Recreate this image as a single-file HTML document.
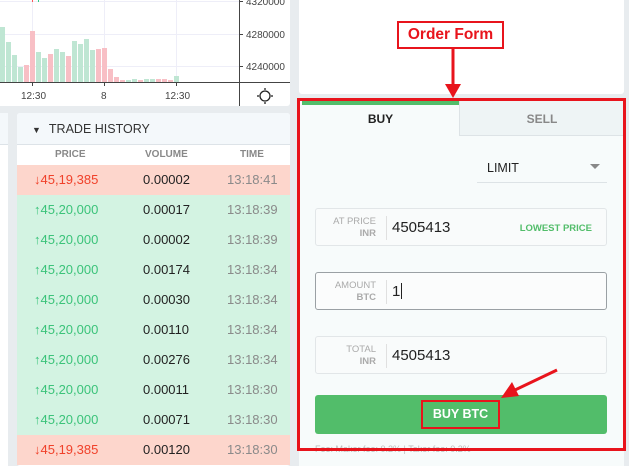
<!DOCTYPE html>
<html><head><meta charset="utf-8"><style>
*{margin:0;padding:0;box-sizing:border-box}
body{width:629px;height:466px;overflow:hidden;background:#e8ecef;font-family:"Liberation Sans",sans-serif;position:relative}
.abs{position:absolute}
.row{position:absolute;left:17px;width:273px;height:30px;font-size:13px;line-height:30px}
.row span{position:absolute}
.p{left:17px}.v{left:126px;color:#222}.t{left:210px;color:#8a8a8a}
.up{background:#d3f3e2}.up .p{color:#3bc37a}
.dn{background:#fdd6cc}.dn .p{color:#f0412a}
.inp{position:absolute;left:315px;width:292px;height:38px;border:1px solid #e2e6e8;border-radius:3px;background:#f9fbfb}
.lab{position:absolute;right:230px;top:7px;text-align:right;font-size:9.5px;color:#aaa;line-height:12px}
.lab b{color:#aaa}
.sep{position:absolute;left:70px;top:7px;width:1px;height:24px;background:#e0e0e0}
.val{position:absolute;left:76px;top:10px;font-size:15px;color:#222}
</style></head><body>
<div class="abs" style="left:0;top:0;width:290px;height:106px;background:#fff;border-radius:0 0 3px 0">
<svg width="290" height="106" style="position:absolute;left:0;top:0">
<g stroke="#eeeef8" stroke-width="1"><line x1="0" y1="1.5" x2="239" y2="1.5"/><line x1="0" y1="34.5" x2="239" y2="34.5"/><line x1="0" y1="66.5" x2="239" y2="66.5"/><line x1="32.5" y1="0" x2="32.5" y2="82"/><line x1="104.5" y1="0" x2="104.5" y2="82"/><line x1="176.5" y1="0" x2="176.5" y2="82"/></g>
<g id="bars"></g>
<line x1="0" y1="82.5" x2="290" y2="82.5" stroke="#444"/>
<line x1="239.5" y1="0" x2="239.5" y2="106" stroke="#444"/>
<g stroke="#444"><line x1="32.5" y1="82" x2="32.5" y2="86"/><line x1="104.5" y1="82" x2="104.5" y2="86"/><line x1="176.5" y1="82" x2="176.5" y2="86"/><line x1="239" y1="1.5" x2="243" y2="1.5"/><line x1="239" y1="34.5" x2="243" y2="34.5"/><line x1="239" y1="66.5" x2="243" y2="66.5"/></g>
<rect x="32" y="0" width="1" height="2" fill="#f55"/><rect x="38" y="0" width="1" height="2" fill="#3c8"/>
<g font-size="10" fill="#444"><text x="246" y="5">4320000</text><text x="246" y="38">4280000</text><text x="246" y="70">4240000</text>
<text x="21" y="99">12:30</text><text x="101" y="99">8</text><text x="165" y="99">12:30</text></g>
<circle cx="265" cy="96" r="5" fill="none" stroke="#222" stroke-width="1.3"/>
<g stroke="#222" stroke-width="1.3"><line x1="265" y1="88" x2="265" y2="90"/><line x1="265" y1="102" x2="265" y2="104"/><line x1="257" y1="96" x2="259" y2="96"/><line x1="271" y1="96" x2="273" y2="96"/></g>
</svg></div>
<div class="abs" style="left:0;top:113px;width:8px;height:353px;background:#fff"></div>
<div class="abs" style="left:0;top:113px;width:8px;height:32px;background:#f4f8fb;border-bottom:1px solid #dde3e8"></div>
<div class="abs" style="left:17px;top:113px;width:273px;height:353px;background:#fff;border-radius:3px;overflow:hidden">
<div style="height:32px;background:#f4f8fb;border-bottom:1px solid #dde3e8;font-size:12.5px;color:#333;line-height:32px;padding-left:15px"><span style="font-size:9px;margin-right:8px">▼</span>TRADE HISTORY</div>
<div style="position:relative;height:20px;font-size:10px;font-weight:bold;color:#888;line-height:20px"><span style="position:absolute;left:38px">PRICE</span><span style="position:absolute;left:128px">VOLUME</span><span style="position:absolute;left:223px">TIME</span></div>
</div>
<div class="row dn" style="top:165px"><span class="p">↓45,19,385</span><span class="v">0.00002</span><span class="t">13:18:41</span></div>
<div class="row up" style="top:195px"><span class="p">↑45,20,000</span><span class="v">0.00017</span><span class="t">13:18:39</span></div>
<div class="row up" style="top:225px"><span class="p">↑45,20,000</span><span class="v">0.00002</span><span class="t">13:18:39</span></div>
<div class="row up" style="top:255px"><span class="p">↑45,20,000</span><span class="v">0.00174</span><span class="t">13:18:34</span></div>
<div class="row up" style="top:285px"><span class="p">↑45,20,000</span><span class="v">0.00030</span><span class="t">13:18:34</span></div>
<div class="row up" style="top:315px"><span class="p">↑45,20,000</span><span class="v">0.00110</span><span class="t">13:18:34</span></div>
<div class="row up" style="top:345px"><span class="p">↑45,20,000</span><span class="v">0.00276</span><span class="t">13:18:34</span></div>
<div class="row up" style="top:375px"><span class="p">↑45,20,000</span><span class="v">0.00011</span><span class="t">13:18:30</span></div>
<div class="row up" style="top:405px"><span class="p">↑45,20,000</span><span class="v">0.00071</span><span class="t">13:18:30</span></div>
<div class="row dn" style="top:435px"><span class="p">↓45,19,385</span><span class="v">0.00120</span><span class="t">13:18:30</span></div>

<div class="abs" style="left:299px;top:0;width:325px;height:94px;background:#fff;border-radius:0 0 3px 3px"></div>
<div class="abs" style="left:299px;top:98px;width:325px;height:368px;background:#f7fbfb"></div>
<div class="abs" style="left:459px;top:101px;width:165px;height:35px;background:#eef4f5;border-left:1px solid #dde3e6;border-bottom:1px solid #dde3e6;font-size:12px;font-weight:bold;color:#888;text-align:center;line-height:36px">SELL</div>
<div class="abs" style="left:302px;top:101px;width:157px;height:4px;background:#52bd6a"></div>
<div class="abs" style="left:302px;top:105px;width:157px;height:31px;font-size:12px;font-weight:bold;color:#222;text-align:center;line-height:29px">BUY</div>
<div class="abs" style="left:487px;top:161px;font-size:12.5px;color:#222">LIMIT</div>
<div class="abs" style="left:590px;top:164px;width:0;height:0;border-left:5px solid transparent;border-right:5px solid transparent;border-top:5px solid #888"></div>
<div class="abs" style="left:477px;top:182px;width:130px;height:1px;background:#dde3e6"></div>
<div class="inp" style="top:208px"><div class="lab">AT PRICE<br><b>INR</b></div><div class="sep"></div><div class="val">4505413</div><div style="position:absolute;right:14px;top:14px;font-size:9.5px;font-weight:bold;color:#52bd6a">LOWEST PRICE</div></div>
<div class="inp" style="top:272px;border-color:#9aa0a4;background:#fbfcfc"><div class="lab">AMOUNT<br><b>BTC</b></div><div class="sep"></div><div class="val">1<span style="display:inline-block;width:1px;height:16px;background:#222;vertical-align:-3px;margin-left:1px"></span></div></div>
<div class="inp" style="top:336px"><div class="lab">TOTAL<br><b>INR</b></div><div class="sep"></div><div class="val">4505413</div></div>
<div class="abs" style="left:315px;top:395px;width:292px;height:39px;background:#52bd6a;border-radius:3px"></div>
<div class="abs" style="left:421px;top:400px;width:79px;height:29px;border:2px solid #e8141c;color:#fff;font-size:12.5px;font-weight:bold;text-align:center;line-height:25px">BUY BTC</div>
<div class="abs" style="left:315px;top:444px;font-size:9px;color:#bbb">Fee: Maker fee: 0.2% | Taker fee: 0.2%</div>
<div class="abs" style="left:297px;top:98px;width:329px;height:353px;border:3px solid #e8141c"></div>
<div class="abs" style="left:397px;top:21px;width:107px;height:28px;border:2px solid #e8141c;background:#fff;color:#e8141c;font-size:15.5px;font-weight:bold;text-align:center;line-height:24px">Order Form</div>
<svg class="abs" style="left:0;top:0" width="629" height="466">
<line x1="453" y1="49" x2="453" y2="86" stroke="#e8141c" stroke-width="3"/><polygon points="445,84 461,84 453,98" fill="#e8141c"/>
<line x1="557" y1="370" x2="515" y2="390" stroke="#e8141c" stroke-width="3"/><polygon points="501,398 512,382 519,396" fill="#e8141c"/>
</svg>
<script>
var d=[[0,27,'g'],[6,42,'g'],[12,55,'g'],[18,67,'g'],[24,65,'r'],[30,31,'r'],[36,52,'g'],[42,58,'g'],[48,54,'r'],[54,49,'g'],[60,52,'g'],[66,56,'r'],[72,41,'g'],[78,44,'g'],[84,39,'g'],[90,50,'g'],[96,49,'r'],[102,48,'r'],[108,69,'r'],[114,77,'r'],[120,80,'r'],[126,80,'g'],[132,79,'g'],[138,80,'r'],[144,79,'g'],[150,79,'g'],[156,79,'r'],[162,79,'r'],[168,80,'r'],[174,76,'g']];
var s='';d.forEach(function(b){s+='<rect x="'+b[0]+'" y="'+b[1]+'" width="5" height="'+(82-b[1])+'" fill="'+(b[2]=='g'?'#bfe6d3':'#f8bfc5')+'"/>'});
document.getElementById('bars').innerHTML=s;
</script>
</body></html>
